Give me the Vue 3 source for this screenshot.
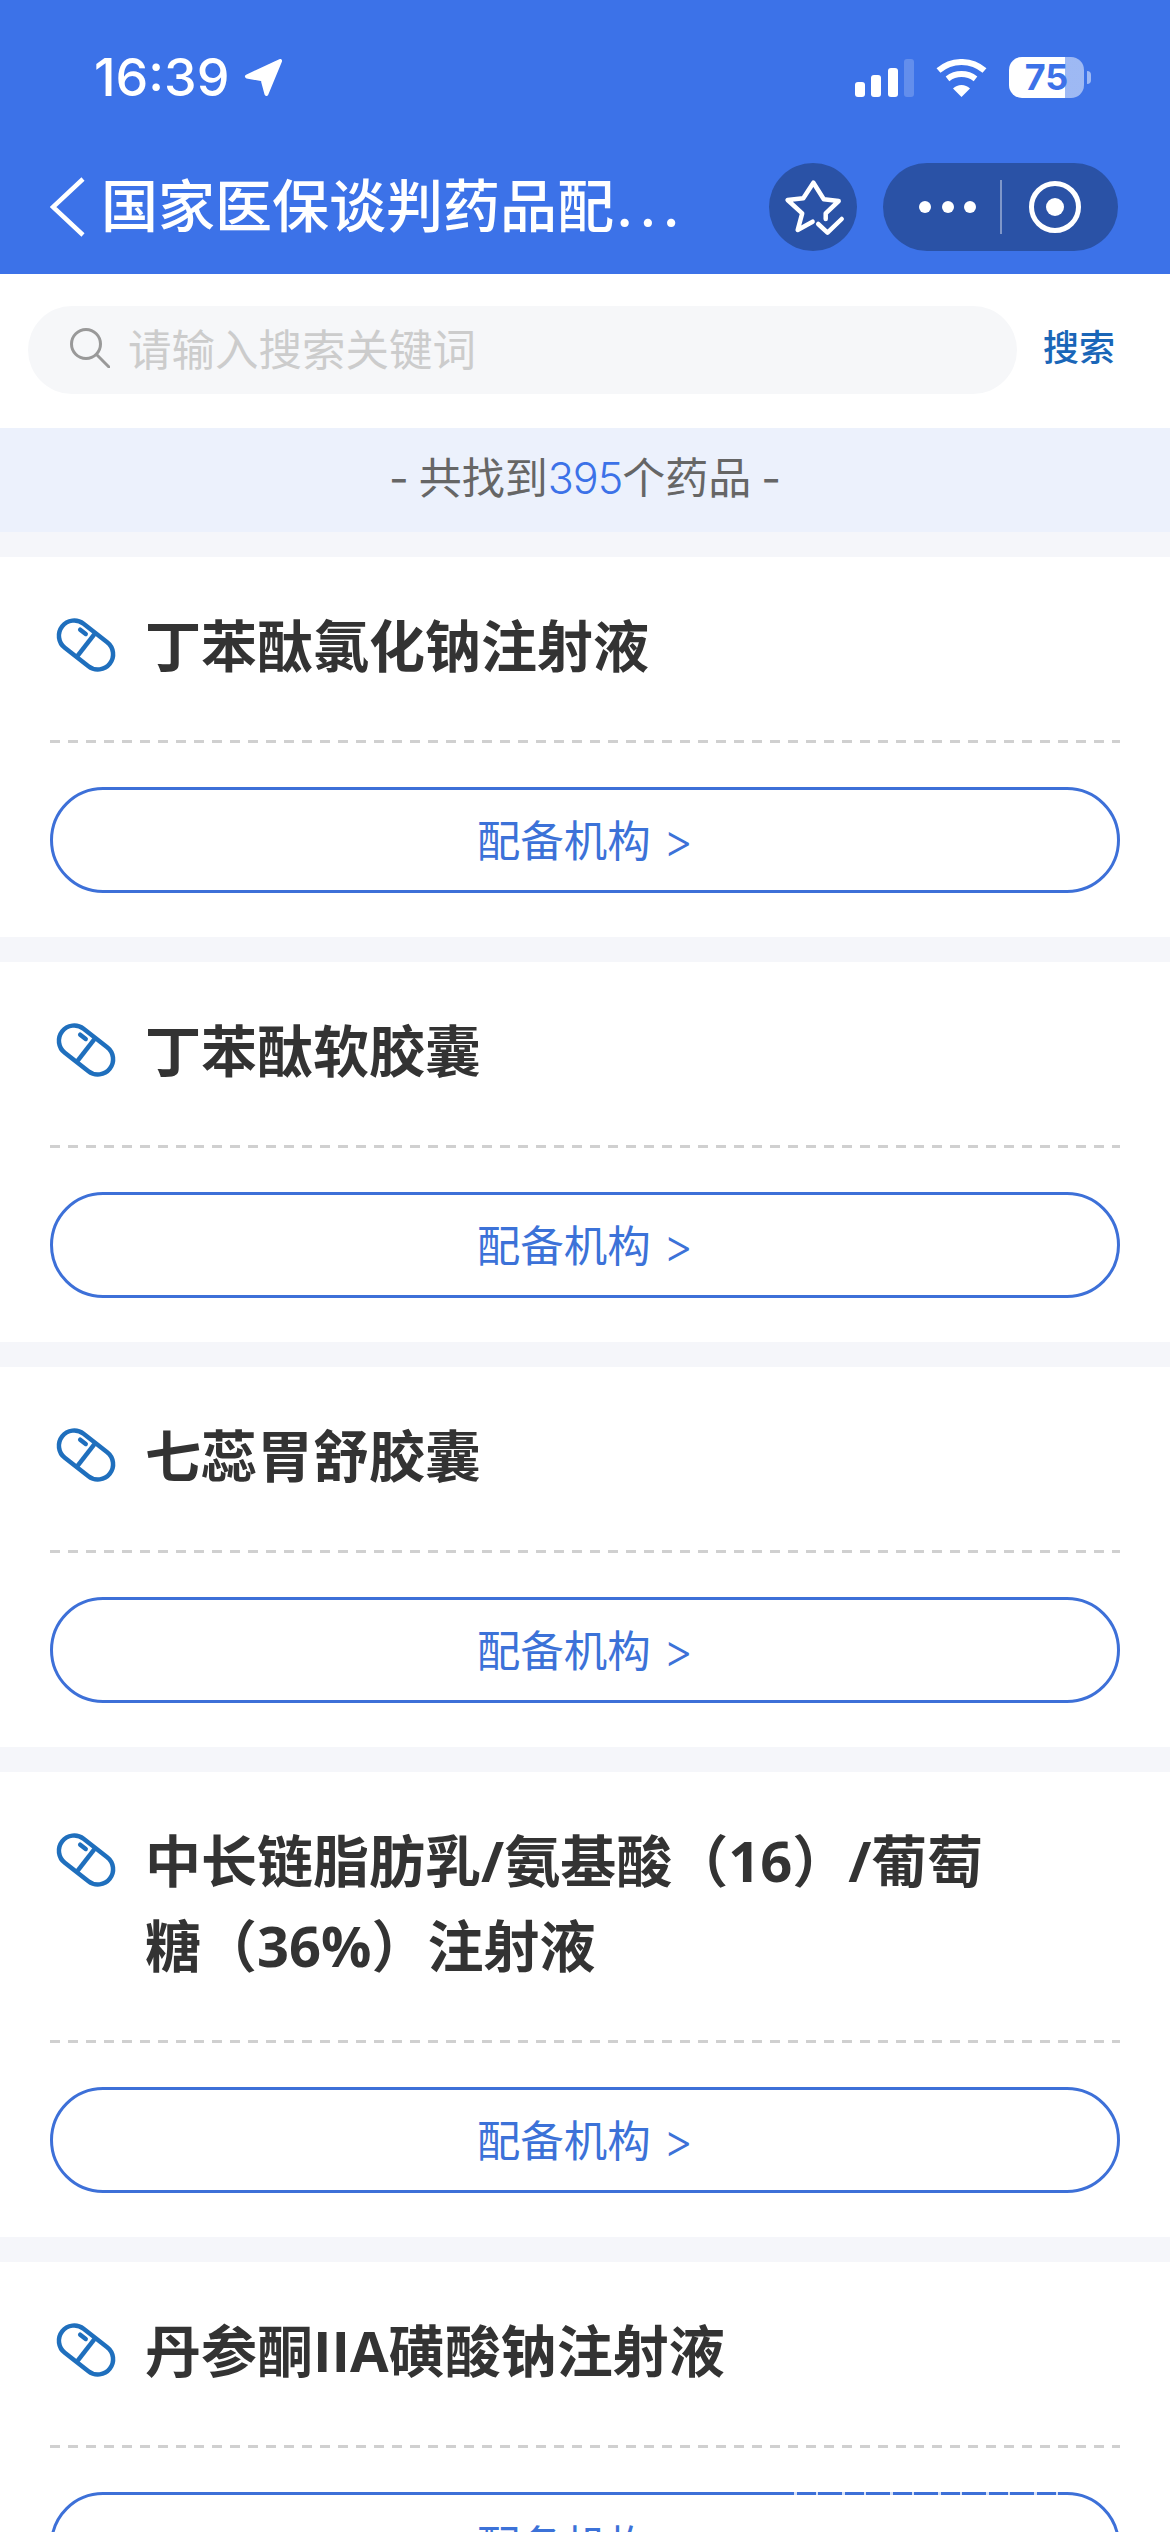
<script setup>
const drugs = [
  '丁苯酞氯化钠注射液',
  '丁苯酞软胶囊',
  '七蕊胃舒胶囊',
  '中长链脂肪乳/氨基酸（16）/葡萄糖（36%）注射液',
  '丹参酮IIA磺酸钠注射液',
]
</script>

<template>
  <div class="page">
    <header class="header">
      <div class="status">
        <div class="clock">
          <span class="time">16:39</span>
          <svg class="loc" viewBox="0 0 40 40"><path d="M37 3 L3 19 L19 22 L23 37 Z" fill="#fff" stroke="#fff" stroke-width="4" stroke-linejoin="round" /></svg>
        </div>
        <div class="indicators">
          <div class="signal">
            <i class="b1"></i><i class="b2"></i><i class="b3"></i><i class="b4"></i>
          </div>
          <svg class="wifi" viewBox="0 0 51 38">
            <path d="M2.5 11.6 A35 35 0 0 1 48.5 11.6" fill="none" stroke="#fff" stroke-width="6" />
            <path d="M11.5 19.8 A23 23 0 0 1 39.5 19.8" fill="none" stroke="#fff" stroke-width="6" />
            <path d="M25.5 38 L17 29.5 A12 12 0 0 1 34 29.5 Z" fill="#fff" />
          </svg>
          <div class="battery"><span>75</span></div>
          <div class="cap"></div>
        </div>
      </div>
      <div class="nav">
        <svg class="back" viewBox="0 0 36 60"><path d="M33 2 L3 30 L33 58" fill="none" stroke="#fff" stroke-width="4.5" /></svg>
        <div class="nav-title">国家医保谈判药品配<span class="dots">...</span></div>
        <div class="star">
          <svg viewBox="0 0 88 88" width="88" height="88">
            <path d="M43.6 58.7 L28.7 67 L33.2 50.3 L18.6 37 L34.3 35.3 L44.4 19.7 L54.8 36.3 L69.7 38 L56.7 50.3 L56.7 56" fill="none" stroke="#fff" stroke-width="4.5" stroke-linecap="round" stroke-linejoin="round" />
            <path d="M49.2 61 L58.5 69.7 L72.7 56" fill="none" stroke="#fff" stroke-width="4.5" stroke-linecap="round" stroke-linejoin="round" />
          </svg>
        </div>
        <div class="capsule">
          <div class="more"><i></i><i></i><i></i></div>
          <div class="sep"></div>
          <div class="target"><i></i></div>
        </div>
      </div>
    </header>

    <div class="search-row">
      <div class="search">
        <svg class="glass" viewBox="0 0 40 40"><circle cx="16" cy="16" r="14.5" fill="none" stroke="#999" stroke-width="3" /><path d="M27 27 L39 39" stroke="#999" stroke-width="3" stroke-linecap="round" /></svg>
        <span class="placeholder">请输入搜索关键词</span>
      </div>
      <span class="search-btn">搜索</span>
    </div>

    <div class="count">- 共找到<em>395</em>个药品 -</div>

    <main class="list">
      <section v-for="name in drugs" :key="name" class="card">
        <div class="title-row">
          <svg class="pill" viewBox="0 0 60 56">
            <g transform="translate(30 28) rotate(38)">
              <rect x="-30.25" y="-15.25" width="60.5" height="30.5" rx="15.25" fill="none" stroke="#1f6fbd" stroke-width="4.5" />
              <path d="M0 -15 V15" stroke="#1f6fbd" stroke-width="4.5" />
              <path d="M-14 -8.5 H-7" stroke="#1f6fbd" stroke-width="4.5" stroke-linecap="round" />
            </g>
          </svg>
          <h2 class="name">{{ name }}</h2>
        </div>
        <div class="divider"></div>
        <div class="action">配备机构 <span class="chev">&gt;</span></div>
      </section>
    </main>

    <div class="watermark"></div>
  </div>
</template>

<style>
html, body { margin: 0; background: #fff; }
</style>

<style scoped>
.page {
  position: relative;
  width: 1170px;
  height: 2532px;
  overflow: hidden;
  background: #f5f6fa;
  font-family: Inter, "Noto Sans CJK SC", sans-serif;
}
.header {
  height: 274px;
  background: #3c72e8;
  display: flex;
  flex-direction: column;
  box-sizing: border-box;
  padding-top: 57px;
}
.status {
  height: 41px;
  display: flex;
  justify-content: space-between;
  align-items: center;
  padding: 0 79px 0 94px;
}
.clock { display: flex; align-items: center; gap: 15px; color: #fff; }
.time { font-size: 52px; font-weight: 500; line-height: 41px; }
.loc { width: 39px; height: 39px; }
.indicators { display: flex; align-items: center; }
.signal { display: flex; align-items: flex-end; gap: 6.5px; height: 38px; margin-right: 22px; }
.signal i { display: block; width: 10px; background: #fff; border-radius: 3px; }
.b1 { height: 15px; }
.b2 { height: 22px; }
.b3 { height: 29px; }
.signal .b4 { height: 38px; background: rgba(255, 255, 255, 0.2); }
.wifi { width: 51px; height: 38px; margin-right: 22px; }
.battery {
  width: 75px;
  height: 41px;
  border-radius: 13px;
  background: linear-gradient(to right, #fff 75%, rgba(255, 255, 255, 0.5) 75%);
  display: flex;
  align-items: center;
  justify-content: center;
  color: #3c72e8;
  font-size: 36px;
  font-weight: 700;
  line-height: 41px;
}
.cap {
  width: 4px;
  height: 13px;
  margin-left: 3px;
  border-radius: 0 4px 4px 0;
  background: rgba(255, 255, 255, 0.5);
}
.nav {
  margin-top: 65px;
  height: 88px;
  display: flex;
  align-items: center;
  padding-left: 50px;
}
.back { width: 36px; height: 60px; flex: none; }
.nav-title {
  width: 667px;
  flex: none;
  padding-left: 15px;
  box-sizing: border-box;
  color: #fff;
  font-size: 57px;
  font-weight: 500;
  white-space: nowrap;
  line-height: 88px;
}
.dots { letter-spacing: 6px; margin-left: 2px; }
.star {
  width: 88px;
  height: 88px;
  margin-left: 16px;
  border-radius: 50%;
  background: #2a52a6;
  flex: none;
}
.star svg { display: block; }
.capsule {
  width: 235px;
  height: 88px;
  margin-left: 26px;
  border-radius: 44px;
  background: #2a52a6;
  display: flex;
  align-items: center;
  flex: none;
}
.more {
  width: 117px;
  box-sizing: border-box;
  padding-left: 12px;
  display: flex;
  justify-content: center;
  gap: 10.5px;
}
.more i { width: 12px; height: 12px; border-radius: 50%; background: #fff; }
.sep { width: 2px; height: 54px; background: rgba(255, 255, 255, 0.4); }
.target {
  width: 52px;
  height: 52px;
  box-sizing: border-box;
  margin-left: 27px;
  border: 5px solid #fff;
  border-radius: 50%;
  display: flex;
  align-items: center;
  justify-content: center;
}
.target i { width: 18px; height: 18px; border-radius: 50%; background: #fff; }
.search-row {
  height: 154px;
  background: #fff;
  box-sizing: border-box;
  padding: 32px 55px 34px 28px;
  display: flex;
  align-items: center;
  justify-content: space-between;
}
.search {
  width: 989px;
  height: 88px;
  border-radius: 44px;
  background: #f6f7f9;
  display: flex;
  align-items: center;
  box-sizing: border-box;
  padding-left: 42px;
}
.glass { width: 40px; height: 40px; flex: none; margin-top: -4px; }
.placeholder { margin-left: 18px; font-size: 43.5px; color: #cccccc; line-height: 86px; }
.search-btn { font-size: 36px; font-weight: 500; color: #1a66b8; line-height: 88px; margin-top: -4px; }
.count {
  height: 104px;
  background: #ecf1fc;
  text-align: center;
  line-height: 100px;
  font-size: 43px;
  color: #666;
  word-spacing: -2px;
}
.count em { font-style: normal; font-weight: 300; color: #3c72e8; letter-spacing: -1px; }
.list {
  padding-top: 25px;
  display: flex;
  flex-direction: column;
  gap: 25px;
}
.card {
  background: #fff;
  box-sizing: border-box;
  padding: 48px 50px 44px;
}
.title-row { display: flex; align-items: flex-start; }
.pill { width: 60px; height: 56px; flex: none; margin: 12px 0 0 6px; overflow: visible; }
.name {
  margin: -2px 0 2px 29px;
  max-width: 870px;
  font-family: "Open Sans", "Noto Sans CJK SC", sans-serif;
  font-size: 56px;
  font-weight: 700;
  line-height: 85px;
  color: #333;
}
.divider {
  margin-top: 50px;
  height: 3px;
  background: repeating-linear-gradient(to right, #d0d0d0 0 10px, transparent 10px 18px);
}
.action {
  margin-top: 44px;
  height: 106px;
  box-sizing: border-box;
  border: 3px solid #3d70d8;
  border-radius: 53px;
  text-align: center;
  line-height: 100px;
  font-size: 43.5px;
  color: #3c72d8;
}
.chev { font-weight: 300; font-size: 46px; }
.watermark {
  position: absolute;
  left: 770px;
  top: 2492px;
  width: 292px;
  height: 3px;
  background: repeating-linear-gradient(
    to right,
    transparent 0 24px,
    rgba(255, 255, 255, 0.8) 24px 27px,
    transparent 27px 46px,
    rgba(255, 255, 255, 0.8) 46px 48px
  );
}
</style>
